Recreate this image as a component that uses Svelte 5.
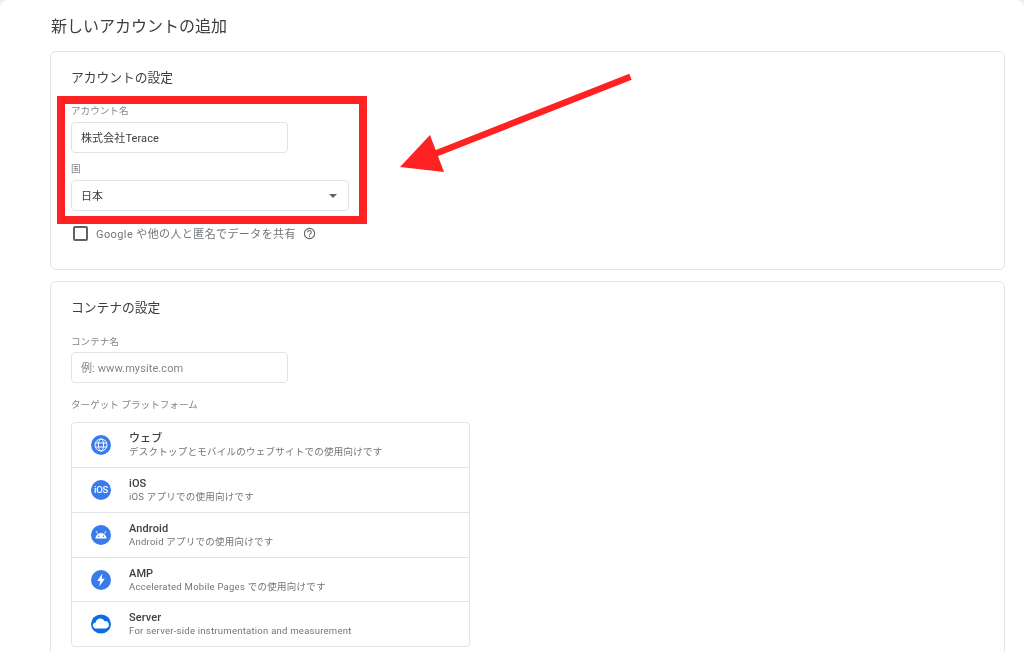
<script>
  const platforms = [
    { id: "web", name: "ウェブ", desc: "デスクトップとモバイルのウェブサイトでの使用向けです" },
    { id: "ios", name: "iOS", desc: "iOS アプリでの使用向けです" },
    { id: "android", name: "Android", desc: "Android アプリでの使用向けです" },
    { id: "amp", name: "AMP", desc: "Accelerated Mobile Pages での使用向けです" },
    { id: "server", name: "Server", desc: "For server-side instrumentation and measurement" }
  ];
</script>

<div class="page">
  <h1>新しいアカウントの追加</h1>

  <section class="card first">
    <h2>アカウントの設定</h2>
    <div class="label">アカウント名</div>
    <div class="input">株式会社Terace</div>
    <div class="label country">国</div>
    <div class="input select">
      <span>日本</span>
      <i class="caret"></i>
    </div>
    <div class="share">
      <span class="box"></span>
      <span>Google や他の人と匿名でデータを共有</span>
      <svg class="help" viewBox="0 0 24 24" width="13" height="13">
        <circle cx="12" cy="12" r="9.5" fill="none" stroke="#5f6368" stroke-width="2" />
        <path d="M8.8 9.6a3.2 3.2 0 1 1 5 2.6c-1.1.8-1.8 1.3-1.8 2.8" fill="none" stroke="#5f6368" stroke-width="2" />
        <rect x="11" y="16.2" width="2" height="2" fill="#5f6368" />
      </svg>
    </div>
  </section>

  <section class="card second">
    <h2>コンテナの設定</h2>
    <div class="label">コンテナ名</div>
    <div class="input placeholder">例: www.mysite.com</div>
    <div class="label target">ターゲット プラットフォーム</div>
    <div class="list">
      {#each platforms as p}
        <div class="row">
          <div class="icon">
            {#if p.id === "web"}
              <svg viewBox="0 0 20 20" width="20" height="20">
                <circle cx="10" cy="10" r="10" fill="#3a7bec" />
                <g fill="none" stroke="#fff" stroke-width="1">
                  <circle cx="10" cy="10" r="6" />
                  <ellipse cx="10" cy="10" rx="2.6" ry="6" />
                  <path d="M4.2 8h11.6M4.2 12h11.6" />
                </g>
              </svg>
            {:else if p.id === "ios"}
              <svg viewBox="0 0 20 20" width="20" height="20">
                <circle cx="10" cy="10" r="10" fill="#3a7bec" />
                <text x="10" y="13.4" text-anchor="middle" class="ios-text">iOS</text>
              </svg>
            {:else if p.id === "android"}
              <svg viewBox="0 0 20 20" width="20" height="20">
                <circle cx="10" cy="10" r="10" fill="#3a7bec" />
                <path d="M4.4 13.6a5.6 5.6 0 0 1 11.2 0z" fill="#fff" />
                <path d="M6.6 8.6 5.2 6.2M13.4 8.6l1.4-2.4" stroke="#fff" stroke-width=".9" />
                <circle cx="7.6" cy="11.2" r=".8" fill="#3a7bec" />
                <circle cx="12.4" cy="11.2" r=".8" fill="#3a7bec" />
              </svg>
            {:else if p.id === "amp"}
              <svg viewBox="0 0 20 20" width="20" height="20">
                <circle cx="10" cy="10" r="10" fill="#3a7bec" />
                <path d="M11.4 3.6 6.2 11h3l-1 5.6 5.6-7.8h-3.1z" fill="#fff" />
              </svg>
            {:else}
              <svg viewBox="0 0 20 20" width="20" height="20">
                <ellipse cx="10" cy="10" rx="10" ry="9.6" fill="#0b6fe0" />
                <path d="M5.2 14.4a3 3 0 0 1-.4-6 4.6 4.6 0 0 1 8.7-1.2 3.6 3.6 0 0 1 1.4 7.2z" fill="#fff" />
              </svg>
            {/if}
          </div>
          <div class="text">
            <div class="name">{p.name}</div>
            <div class="desc">{p.desc}</div>
          </div>
        </div>
      {/each}
    </div>
  </section>

  <!-- annotation drawn over the screenshot -->
  <div class="highlight"></div>
  <svg class="arrow" viewBox="0 0 1024 651" width="1024" height="651">
    <path d="M630.5 76.7 432 155" stroke="#ff2222" stroke-width="6.5" fill="none" />
    <path d="M400 167 430 135 444 172z" fill="#ff2222" />
  </svg>
</div>

<style>
  :global(body) {
    background: #eeeff1;
    overflow: hidden;
  }

  .page {
    position: relative;
    box-sizing: border-box;
    height: 651px;
    overflow: hidden;
    padding: 17px 19px 0 50px;
    background: #fff;
    border-radius: 8px 8px 0 0;
    font-family: Roboto, "Noto Sans CJK JP", sans-serif;
    color: #3c4043;
    filter: blur(0.45px);
  }

  h1 {
    margin: 0 0 15px 1px;
    font-size: 16px;
    line-height: 19px;
    font-weight: 400;
    color: #3c4043;
  }

  h2 {
    margin: 0;
    font-size: 12.75px;
    line-height: 19px;
    font-weight: 400;
    color: #3c4043;
  }

  .card {
    box-sizing: border-box;
    border: 1px solid #e3e4e7;
    border-radius: 6px;
    padding: 0 20px;
    background: #fff;
  }

  .first {
    height: 219px;
    padding-top: 16px;
    margin-bottom: 11px;
  }

  .second {
    height: 400px;
    padding-top: 16px;
  }

  .label {
    font-size: 9.6px;
    line-height: 14px;
    color: #80868b;
  }

  .first .label {
    margin-top: 17px;
  }

  .first .label.country {
    margin-top: 9px;
  }

  .second .label {
    margin-top: 18px;
  }

  .second .label.target {
    margin-top: 15px;
  }

  .input {
    box-sizing: border-box;
    width: 217px;
    height: 31px;
    margin-top: 4px;
    padding: 0 10px 2px 9px;
    display: flex;
    align-items: center;
    border: 1px solid #e0e2e5;
    border-radius: 4px;
    font-size: 11px;
    letter-spacing: 0.1px;
    color: #3c4043;
  }

  .second .input {
    margin-top: 3px;
  }

  .select {
    width: 278px;
    justify-content: space-between;
    padding-right: 11px;
  }

  .placeholder {
    color: #80868b;
  }

  .caret {
    width: 0;
    height: 0;
    margin-top: 2px;
    border-left: 4px solid transparent;
    border-right: 4px solid transparent;
    border-top: 4px solid #5f6368;
  }

  .share {
    display: flex;
    align-items: center;
    margin: 14px 0 0 2px;
    font-size: 11px;
    letter-spacing: 0.4px;
    color: #70757a;
  }

  .box {
    box-sizing: border-box;
    width: 15px;
    height: 15px;
    margin-right: 8px;
    border: 2px solid #5f6368;
    border-radius: 2px;
  }

  .help {
    margin-left: 7px;
  }

  .list {
    box-sizing: border-box;
    width: 399px;
    margin-top: 10px;
    border: 1px solid #e0e2e5;
    border-radius: 4px;
  }

  .row {
    box-sizing: border-box;
    height: 45px;
    display: flex;
    align-items: center;
    padding-left: 19px;
    border-bottom: 1px solid #e0e2e5;
  }

  .row:nth-child(4) {
    height: 44px;
  }

  .row:last-child {
    height: 44px;
    border-bottom: 0;
  }

  .icon {
    width: 20px;
    height: 20px;
    margin-right: 18px;
    display: flex;
    justify-content: center;
  }

  .icon svg {
    flex: none;
  }

  .ios-text {
    font-size: 9.5px;
    font-weight: 500;
    letter-spacing: -0.3px;
    fill: #fff;
  }

  .name {
    font-size: 11px;
    line-height: 14px;
    font-weight: 500;
    letter-spacing: 0.1px;
    color: #3c4043;
  }

  .desc {
    font-size: 9.5px;
    line-height: 12px;
    letter-spacing: 0.25px;
    color: #70757a;
  }

  .highlight {
    position: absolute;
    left: 57px;
    top: 96px;
    width: 294px;
    height: 112px;
    border: 8px solid #ff2222;
  }

  .arrow {
    position: absolute;
    left: 0;
    top: 0;
  }
</style>
